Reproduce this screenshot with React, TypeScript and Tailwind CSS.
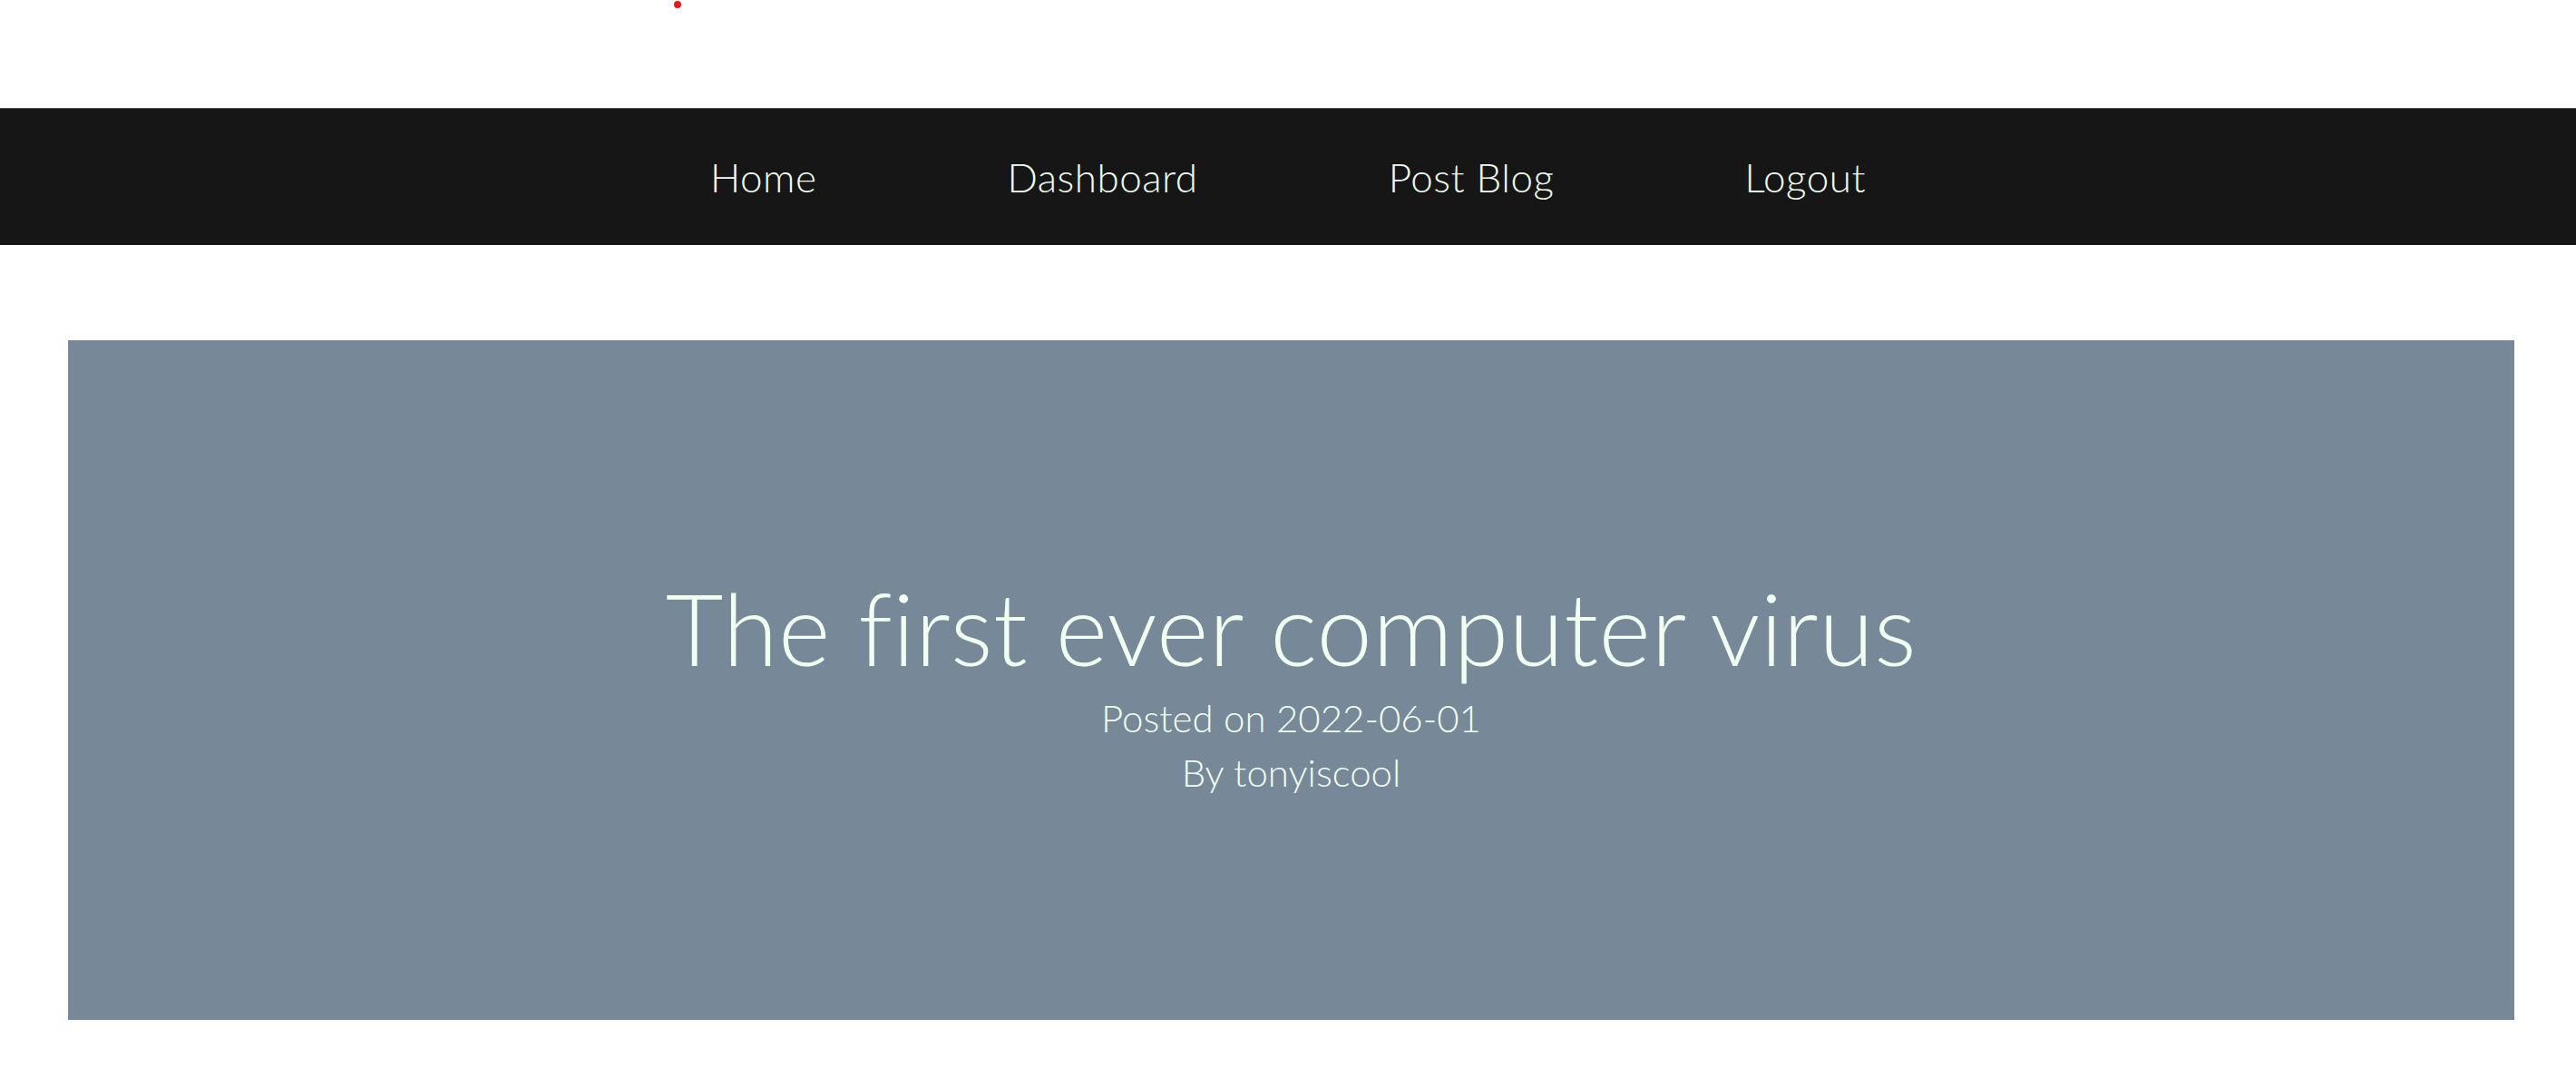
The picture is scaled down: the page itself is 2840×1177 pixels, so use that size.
export default function App() {
  const links = ['Home', 'Dashboard', 'Post Blog', 'Logout']

  return (
    <div className="min-h-screen bg-white font-['Lato','Noto_Sans',sans-serif] font-light text-[#f0fff0]">
      {/* top strip with the little red marker */}
      <div className="relative h-[119px]">
        <span className="absolute left-[743px] top-[1px] h-[8px] w-[8px] rounded-full bg-[#e5181b]" />
      </div>

      <nav className="flex h-[151px] items-center justify-center gap-[210px] border-t border-[#4a4a4a] bg-[#161616]">
        {links.map((link) => (
          <a key={link} href="#" className="text-[44px] leading-none tracking-[0.5px]">
            {link}
          </a>
        ))}
      </nav>

      <main className="pt-[105px] pl-[75px] pr-[68px]">
        <section className="flex h-[749px] flex-col items-center justify-center bg-[#778899] pt-[6px] text-center">
          <h1 className="text-[110px] leading-[1.2] tracking-[0.5px]">The first ever computer virus</h1>
          <p className="mt-[4px] text-[42px] leading-[60px]">Posted on 2022-06-01</p>
          <p className="text-[42px] leading-[60px]">By tonyiscool</p>
        </section>
      </main>
    </div>
  )
}
